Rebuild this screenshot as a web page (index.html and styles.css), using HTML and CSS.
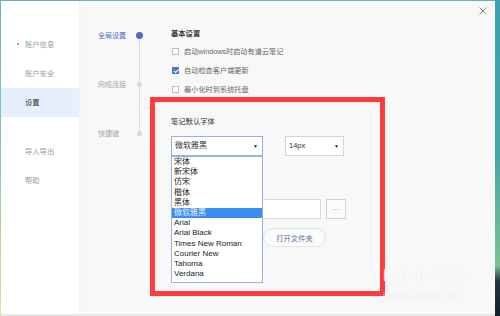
FILE: index.html
```html
<!DOCTYPE html>
<html lang="zh-CN">
<head>
  <meta charset="UTF-8" />
  <title>设置</title>
  <link rel="stylesheet" href="styles.css">
</head>
<body>
  <div class="screen">
    <div class="edge-left"></div>

    <div class="window">
      <aside class="sidebar">
        <div class="side-item unread">账户信息</div>
        <div class="side-item">账户安全</div>
        <div class="side-item active">设置</div>
        <div class="side-item group">导入导出</div>
        <div class="side-item">帮助</div>
      </aside>

      <main class="main">
        <button class="close" title="关闭">
          <svg width="8" height="8" viewBox="0 0 8 8"><path d="M0.5 0.5L7.5 7.5M7.5 0.5L0.5 7.5" stroke="#8a8f99" stroke-width="1"/></svg>
        </button>

        <nav class="steps">
          <div class="step current"><span>全局设置</span><i></i></div>
          <div class="step"><span>网络连接</span><i></i></div>
          <div class="step"><span>快捷键</span><i></i></div>
        </nav>

        <section class="content">
          <h3 class="title">基本设置</h3>
          <label class="check"><span class="box"></span>启动windows时启动有道云笔记</label>
          <label class="check"><span class="box checked"></span>自动检查客户端更新</label>
          <label class="check"><span class="box"></span>最小化时到系统托盘</label>

          <h3 class="title font-title">笔记默认字体</h3>
          <div class="select-row">
            <div class="select font-select">
              微软雅黑<span class="arrow">▼</span>
              <ul class="options">
                <li>宋体</li>
                <li>新宋体</li>
                <li>仿宋</li>
                <li>楷体</li>
                <li>黑体</li>
                <li class="selected">微软雅黑</li>
                <li>Arial</li>
                <li>Arial Black</li>
                <li>Times New Roman</li>
                <li>Courier New</li>
                <li>Tahoma</li>
                <li>Verdana</li>
              </ul>
            </div>
            <div class="select size-select">14px<span class="arrow">▼</span></div>
          </div>

          <div class="path-row">
            <div class="path-input"></div>
            <button class="browse">···</button>
          </div>
          <button class="open-folder">打开文件夹</button>
        </section>

        <div class="mark"></div>

        <div class="watermark">
          <div class="wm-logo">Bai<span class="paw">du</span>经验</div>
          <div class="wm-url">jingyan.baidu.com</div>
        </div>
      </main>
    </div>

    <div class="edge-right"></div>
  </div>
</body>
</html>
```

FILE: styles.css
```css
:root {
  --accent: #4a6fc4;
  --muted: #a3a6ad;
  --text: #333;
  --label: #666;
  --mark: #ff3b3b;
  --select-border: #94b3e3;
}

* {
  box-sizing: border-box;
}

body {
  margin: 0;
  width: 500px;
  height: 316px;
  overflow: hidden;
  font-family: "Liberation Sans", "Noto Sans CJK SC", sans-serif;
}

.screen {
  display: flex;
  height: 316px;
  background: linear-gradient(to bottom, #5cb7c1 0, #5cb7c1 1px, #e7e8ec 1px);
}

.edge-left {
  width: 1px;
  background: linear-gradient(to bottom, #5cb7c1, #8fd0a4 55%, #efe08c);
}

.edge-right {
  width: 5px;
  background: linear-gradient(to bottom, #3aa1ad 0%, #45a8a6 50%, #7dc292 84%, #23343f 89%, #142029 100%);
}

.window {
  display: flex;
  width: 494px;
  height: 313px;
  margin-top: 1px;
}

/* sidebar */
.sidebar {
  width: 78px;
  padding-top: 29px;
  background: #fff;
  box-shadow: 1px 0 3px rgba(0, 0, 0, 0.04);
  position: relative;
  z-index: 1;
}

.side-item {
  position: relative;
  height: 29px;
  line-height: 29px;
  padding-left: 24px;
  font-size: 7.3px;
  color: #9a9da4;
}

.side-item.unread::before {
  content: "";
  position: absolute;
  left: 16px;
  top: 13px;
  width: 2px;
  height: 2px;
  border-radius: 50%;
  background: #ef5b78;
}

.side-item.active {
  background: #e8effc;
  color: var(--text);
}

.side-item.group {
  margin-top: 20px;
}

/* main */
.main {
  flex: 1;
  position: relative;
  display: flex;
  padding: 27px 0 0 19px;
  background: #f8f8f9;
}

.close {
  position: absolute;
  top: 6px;
  right: 8px;
  padding: 0;
  border: none;
  background: none;
  line-height: 0;
}

.steps {
  position: relative;
  width: 45px;
}

.steps::before {
  content: "";
  position: absolute;
  left: 41px;
  top: 7px;
  width: 1px;
  height: 98px;
  background: #dcdde0;
}

.step {
  display: flex;
  align-items: center;
  height: 14px;
  margin-bottom: 35px;
  font-size: 7px;
  color: var(--muted);
}

.step span {
  width: 38px;
}

.step i {
  position: relative;
  width: 5px;
  height: 5px;
  margin-left: 1px;
  border-radius: 50%;
  background: #d6d7da;
}

.step.current {
  color: var(--accent);
}

.step.current i {
  width: 7px;
  height: 7px;
  margin-left: 0;
  background: var(--accent);
}

.content {
  margin-left: 28px;
  flex: 1;
}

.title {
  margin: 0 0 1.5px;
  height: 12px;
  line-height: 12px;
  font-size: 7.3px;
  font-weight: 600;
  color: var(--text);
}

.check {
  display: flex;
  align-items: center;
  height: 19px;
  font-size: 7.2px;
  color: var(--label);
}

.box {
  width: 7px;
  height: 7px;
  margin: 0 5px 0 1px;
  border: 1px solid #bdbfc4;
  background: #fff;
  position: relative;
}

.box.checked {
  border-color: #4e72c6;
  background: #4e72c6;
}

.box.checked::after {
  content: "";
  position: absolute;
  left: 1.5px;
  top: 0;
  width: 2px;
  height: 3.5px;
  border: solid #fff;
  border-width: 0 1px 1px 0;
  transform: rotate(45deg);
}

.font-title {
  margin-top: 17.5px;
  font-weight: 400;
}

.select-row {
  display: flex;
  margin-top: 8px;
}

.select {
  position: relative;
  height: 20px;
  line-height: 18px;
  padding-left: 3px;
  font-size: 8px;
  color: var(--text);
  background: #fff;
  border: 1px solid #d4d5d8;
}

.font-select {
  width: 92px;
  border-color: var(--select-border);
}

.size-select {
  width: 59px;
  margin-left: 22px;
  font-size: 7.5px;
}

.arrow {
  position: absolute;
  right: 4px;
  top: 0;
  font-size: 5px;
  color: #222;
}

.options {
  position: absolute;
  top: 19px;
  left: -1px;
  width: 92px;
  margin: 0;
  padding: 0 0 2.5px;
  list-style: none;
  background: #fff;
  border: 1px solid var(--select-border);
  z-index: 2;
}

.options li {
  height: 10.2px;
  line-height: 10.2px;
  padding-left: 2px;
  font-size: 8px;
  color: #222;
  white-space: nowrap;
}

.options li.selected {
  background: #3a8ef2;
  color: #e9f1ff;
}

.path-row {
  display: flex;
  margin-top: 43px;
}

.path-input {
  width: 150px;
  height: 20px;
  background: #fff;
  border: 1px solid #d9dadd;
}

.browse {
  width: 20px;
  height: 20px;
  margin-left: 5px;
  padding: 0;
  border: 1px solid #cfd0d3;
  background: #fbfbfb;
  color: #777;
  font-size: 7px;
  font-family: inherit;
}

.open-folder {
  display: block;
  width: 63px;
  height: 19px;
  margin: 9px 0 0 92px;
  padding: 0;
  border: 1px solid #dfe3ea;
  border-radius: 10px;
  background: #fafbfc;
  color: #5f6f9c;
  font-size: 7.3px;
  font-family: inherit;
}

/* annotation drawn on top of the screenshot */
.mark {
  position: absolute;
  left: 71px;
  top: 96px;
  width: 235px;
  height: 199px;
  border: 5px solid var(--mark);
  z-index: 3;
}

.watermark {
  position: absolute;
  left: 304px;
  top: 265px;
  white-space: nowrap;
  color: rgba(255, 255, 255, 0.85);
  text-shadow: 0 0 1px rgba(0, 0, 0, 0.1);
  z-index: 4;
}

.wm-logo {
  font-size: 16px;
  font-weight: bold;
  line-height: 20px;
}

.wm-logo .paw {
  margin: 0 4px 0 3px;
}

.wm-url {
  margin-top: 4px;
  font-size: 9.5px;
  line-height: 11px;
}
```
